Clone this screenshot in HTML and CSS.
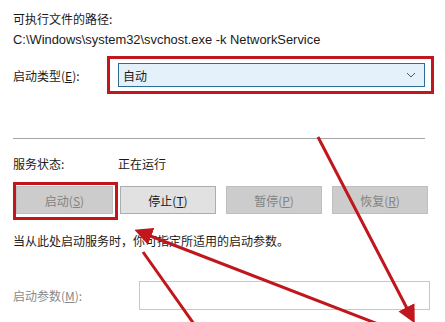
FILE: index.html
```html
<!DOCTYPE html>
<html lang="zh-CN">
<head>
    <meta charset="UTF-8">
    <title>服务属性</title>
    <link rel="stylesheet" href="styles.css">
</head>
<body>
    <div class="dialog">
        <div class="path-label">可执行文件的路径:</div>
        <div class="path-value">C:\Windows\system32\svchost.exe -k NetworkService</div>

        <div class="row startup-row">
            <div class="label">启动类型(<u>E</u>):</div>
            <div class="highlight combo-wrap">
                <div class="combo">
                    <span>自动</span>
                    <svg class="chevron" width="10" height="6" viewBox="0 0 10 6"><path d="M1 1 L5 5 L9 1" fill="none" stroke="#555" stroke-width="1"/></svg>
                </div>
            </div>
        </div>

        <div class="separator"></div>

        <div class="row status-row">
            <div class="label">服务状态:</div>
            <div class="status">正在运行</div>
        </div>

        <div class="buttons">
            <div class="highlight btn-wrap">
                <button class="btn disabled">启动(<u>S</u>)</button>
            </div>
            <button class="btn">停止(<u>T</u>)</button>
            <button class="btn disabled">暂停(<u>P</u>)</button>
            <button class="btn disabled">恢复(<u>R</u>)</button>
        </div>

        <div class="hint">当从此处启动服务时，你可指定所适用的启动参数。</div>

        <div class="row param-row">
            <div class="label muted">启动参数(<u>M</u>):</div>
            <div class="param-input"></div>
        </div>
    </div>

    <!-- 标注箭头 -->
    <svg class="arrows" width="445" height="322" viewBox="0 0 445 322">
        <defs>
            <marker id="head" markerWidth="6" markerHeight="6" refX="4" refY="3" orient="auto" markerUnits="strokeWidth">
                <path d="M0 0 L6 3 L0 6 Z" fill="#c0161c"/>
            </marker>
        </defs>
        <line x1="318" y1="137" x2="412" y2="318" stroke="#c0161c" stroke-width="3" marker-end="url(#head)"/>
        <line x1="378" y1="324" x2="140" y2="232" stroke="#c0161c" stroke-width="3" marker-end="url(#head)"/>
        <line x1="143" y1="252" x2="194" y2="324" stroke="#c0161c" stroke-width="3"/>
    </svg>
</body>
</html>
```

FILE: styles.css
```css
:root {
    --text: #1a1a1a;
    --muted: #8a8a8a;
    --red: #c0161c;
}

body {
    margin: 0;
    background: #fff;
    font-family: "Noto Sans CJK SC", "Liberation Sans", sans-serif;
    font-size: 12px;
    color: var(--text);
    width: 445px;
    height: 322px;
    overflow: hidden;
    position: relative;
}

.dialog {
    padding: 10px 0 0 13px;
    width: 434px;
    box-sizing: border-box;
}

u {
    text-decoration: underline;
    text-underline-offset: 1px;
}

.path-label {
    line-height: 17px;
}

.path-value {
    margin-top: 4px;
    line-height: 17px;
    font-family: "Liberation Sans", "Noto Sans CJK SC", sans-serif;
    font-size: 12.9px;
}

.row {
    display: flex;
    align-items: center;
}

.label {
    width: 94px;
    flex-shrink: 0;
}

.muted {
    color: var(--muted);
}

.startup-row {
    margin-top: 8px;
}

.highlight {
    border: 3px solid var(--red);
}

.combo-wrap {
    padding: 4px 6px 4px 8px;
    width: 313px;
}

.combo {
    height: 24px;
    box-sizing: border-box;
    border: 1px solid #2a6e98;
    background: #e4f1fb;
    display: flex;
    align-items: center;
    justify-content: space-between;
    padding: 0 8px 0 4px;
}

.separator {
    margin-top: 44px;
    height: 1px;
    background: #a6a6a6;
    width: 412px;
}

.status-row {
    margin-top: 16px;
    line-height: 17px;
}

.status-row .label {
    width: 105px;
}

.buttons {
    margin-top: 10px;
    display: flex;
    align-items: flex-start;
}

.btn-wrap {
    padding: 1px 2px 3px 0;
}

.btn {
    font-family: inherit;
    font-size: 12px;
    color: var(--text);
    height: 28px;
    width: 96px;
    margin: 0;
    background: #e1e1e1;
    border: 1px solid #adadad;
    padding: 0;
}

.buttons > .btn {
    margin-top: 4px;
    margin-left: 2px;
}

.buttons > .btn + .btn {
    margin-left: 10px;
}

.btn.disabled {
    background: #cccccc;
    border-color: #bfbfbf;
    color: #838383;
}

.btn-wrap .btn {
    width: 97px;
}

.hint {
    margin-top: 12px;
    line-height: 17px;
}

.param-row {
    margin-top: 32px;
}

.param-row .label {
    width: 126px;
}

.param-input {
    width: 291px;
    height: 29px;
    box-sizing: border-box;
    border: 1px solid #c8c8c8;
    background: #fff;
}

.arrows {
    position: absolute;
    left: 0;
    top: 0;
    pointer-events: none;
}
```
